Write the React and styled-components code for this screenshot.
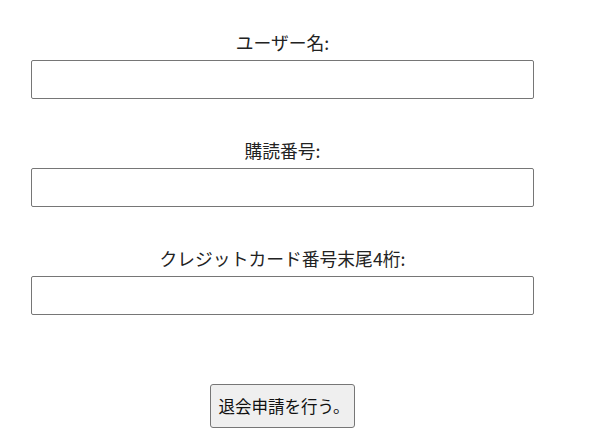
import React from "react";
import styled, { createGlobalStyle } from "styled-components";

const Global = createGlobalStyle`
  html, body { margin: 0; padding: 0; background: #ffffff; }
  body { font-family: "Noto Sans CJK JP", "Noto Sans", sans-serif; color: #222222; }
`;

const Form = styled.form`
  width: 565px;
  padding-top: 29px;
  display: flex;
  flex-direction: column;
  align-items: center;
`;

const Field = styled.div`
  display: flex;
  flex-direction: column;
  align-items: center;
  margin-bottom: 38px;
`;

const Label = styled.label`
  font-size: 17.8px;
  line-height: 26px;
  margin-bottom: 5px;
  color: #222;
`;

const Input = styled.input`
  box-sizing: border-box;
  width: 503px;
  height: 39px;
  margin: 0;
  border: 1px solid #767676;
  border-radius: 2px;
  background: #fff;
  font-size: 16px;
  padding: 0 6px;
`;

const Button = styled.button`
  box-sizing: border-box;
  margin-top: 31px;
  width: 145px;
  height: 44px;
  padding: 0 0 0 3px;
  white-space: nowrap;
  text-align: center;
  border: 1px solid #767676;
  border-radius: 3px;
  background: #efefef;
  color: #111;
  font-family: "Noto Sans CJK JP", "Noto Sans", sans-serif;
  font-size: 16.5px;
  line-height: 1;
`;

const fields = [
  { id: "user", label: "ユーザー名:" },
  { id: "sub", label: "購読番号:" },
  { id: "card", label: "クレジットカード番号末尾4桁:" },
];

export default function App() {
  return (
    <>
      <Global />
      <Form onSubmit={(e) => e.preventDefault()}>
        {fields.map((f) => (
          <Field key={f.id}>
            <Label htmlFor={f.id}>{f.label}</Label>
            <Input id={f.id} type="text" />
          </Field>
        ))}
        <Button type="submit">退会申請を行う。</Button>
      </Form>
    </>
  );
}
